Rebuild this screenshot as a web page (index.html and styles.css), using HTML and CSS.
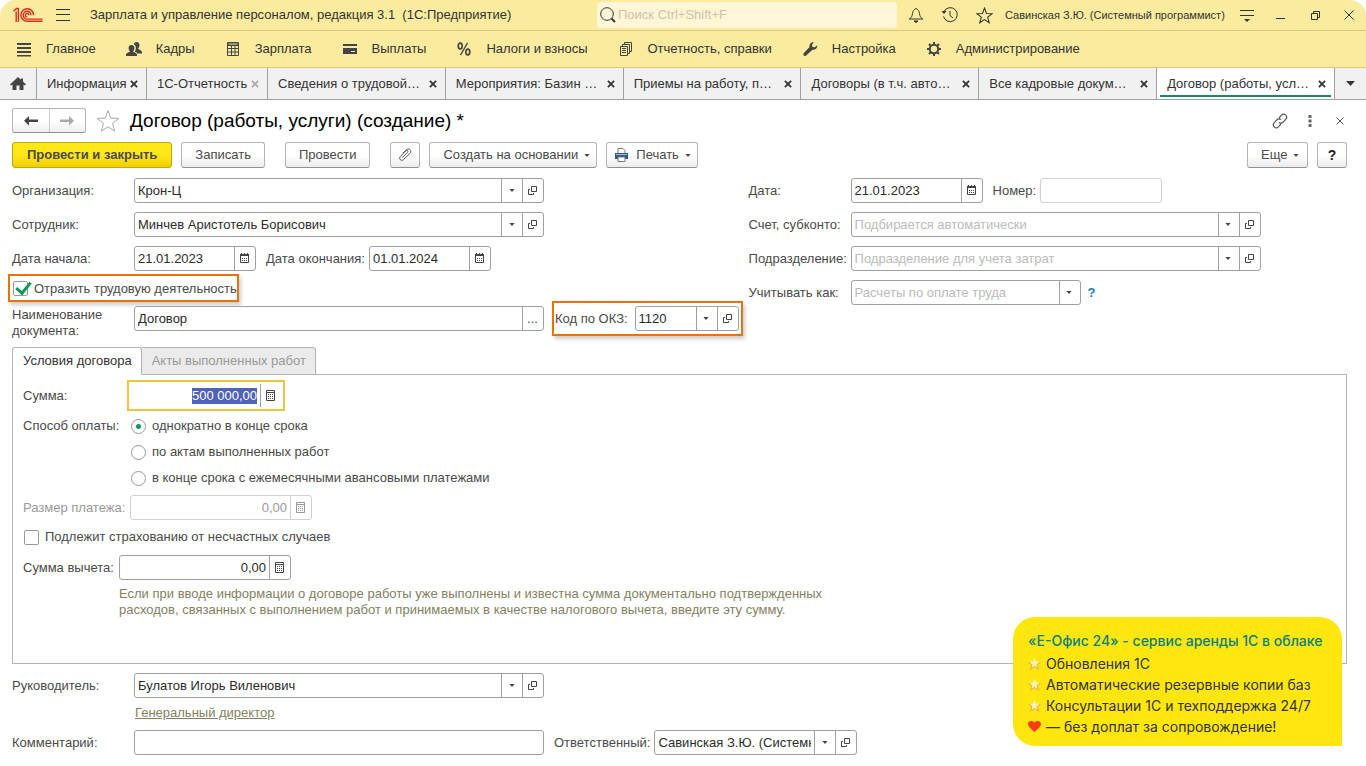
FILE: index.html
```html
<!DOCTYPE html>
<html lang="ru">

<head>
  <meta charset="utf-8">
  <meta name="viewport" content="width=device-width, initial-scale=1.0">
  <title>Договор (работы, услуги) (создание) *</title>
  <link rel="stylesheet" href="styles.css">
</head>

<body>
  <svg class="sprite" aria-hidden="true">
    <symbol id="i-down" viewBox="0 0 7 4">
      <path d="M0 0h7L3.5 4z" fill="currentColor" />
    </symbol>
    <symbol id="i-open" viewBox="0 0 11 11">
      <path d="M4.5 1.5h5v5h-5zM3 4.5H1.5v5h5V8" fill="none" stroke="currentColor" />
    </symbol>
    <symbol id="i-cal" viewBox="0 0 11 11">
      <path d="M1 1h9v2H1z" fill="currentColor" />
      <path d="M2.5 0v2M5.500 0v2M8.500 0v2" stroke="currentColor" />
      <path d="M1.500 3v6.500h8V3" fill="none" stroke="currentColor" />
      <path d="M3 5.500h1m1 0h1m1 0h1M3 7.500h1m1 0h1m1 0h1" stroke="currentColor" />
    </symbol>
    <symbol id="i-calc" viewBox="0 0 11 11">
      <path d="M1.5.5h8v10h-8zM1.5 2.5h8" fill="none" stroke="currentColor" />
      <path d="M3 4.5h1m1 0h1m1 0h1M3 6.5h1m1 0h1m1 0h1M3 8.5h1m1 0h1m1 0h1" stroke="currentColor" />
    </symbol>
    <symbol id="i-x" viewBox="0 0 9 9">
      <path d="M1 1l7 7M8 1L1 8" stroke="currentColor" stroke-width="2" />
    </symbol>
    <symbol id="i-star" viewBox="0 0 24 24">
      <path d="M12 1.5l2.8 7.6 8 .3-6.3 5 2.2 7.8-6.7-4.5-6.7 4.5 2.2-7.8-6.3-5 8-.3z" fill="none" stroke="currentColor" />
    </symbol>
    <symbol id="i-gold" viewBox="0 0 24 24">
      <path d="M12 1l3.2 7.4 8 .6-6.1 5.2 2 7.8-7.1-4.2L4.900 22l2-7.800L.8 9l8-.6z" fill="#fff3b0" />
      <path d="M.8 9l6.100 5.200L4.900 22l7.100-4.200 7.100 4.200-2-7.800L23.200 9" fill="none" stroke="#eeb040" stroke-width="2" />
    </symbol>
  </svg>

  <header class="titlebar">
    <svg class="logo" viewBox="0 0 30 16" fill="none" stroke="#dc2b1f" stroke-width="1.4">
      <path d="M.5 4.2L3.5 1.5H5.4V15M3.2 4.5V15" />
      <path d="M20.500 8.300A6.300 6.300 0 1 0 14.200 14.300H29.500" />
      <path d="M18 8.300A3.900 3.900 0 1 0 14.200 12.100H29.500" />
      <path d="M15.800 8.300A1.700 1.700 0 1 0 14.200 9.900" />
    </svg>
    <button class="tb-btn burger" aria-label="Меню">
      <svg width="14" height="12" viewBox="0 0 14 12"><path d="M0 .5h14M0 5.5h14M0 11.5h14" stroke="#333" /></svg>
    </button>
    <div class="app-title">Зарплата и управление персоналом, редакция 3.1 &nbsp;(1С:Предприятие)</div>
    <label class="search">
      <svg width="16" height="16" viewBox="0 0 16 16" fill="none" stroke="#333"><circle cx="7" cy="7" r="6.3" /><path d="M11.5 11.5l3.5 3.5" stroke-width="2" /></svg>
      <input type="text" placeholder="Поиск Ctrl+Shift+F" aria-label="Поиск">
    </label>
    <button class="tb-btn" aria-label="Уведомления">
      <svg width="16" height="16" viewBox="0 0 16 16" fill="none" stroke="#333"><path d="M8 1.500C6 2.500 4.800 3.800 4.500 6.500c-.3 2.800-1.200 4-3.300 5.500h13.600c-2.100-1.500-3-2.700-3.300-5.500C11.200 3.800 10 2.500 8 1.500z" /><path d="M6 14h4l-2 1.500z" fill="#333" /></svg>
    </button>
    <button class="tb-btn" aria-label="История">
      <svg width="18" height="16" viewBox="0 0 18 16" fill="none" stroke="#333"><path d="M3 4.5a7 7 0 1 1-.5 5" /><path d="M.5 4h5L3 7z" fill="#333" stroke="none" /><path d="M9 4v4.500l3 2.500" /></svg>
    </button>
    <button class="tb-btn" aria-label="Избранное">
      <svg width="17" height="17"><use href="#i-star" stroke-width="1.5" /></svg>
    </button>
    <div class="user">Савинская З.Ю. (Системный программист)</div>
    <button class="tb-btn" aria-label="Сервис">
      <svg width="14" height="13" viewBox="0 0 14 13"><path d="M0 1.5h14M0 6.5h14" stroke="#333" /><path d="M4 10h6l-3 3z" fill="#333" /></svg>
    </button>
    <button class="tb-btn" aria-label="Свернуть">
      <svg width="10" height="10" viewBox="0 0 10 10"><path d="M0 8.5h9" stroke="#333" /></svg>
    </button>
    <button class="tb-btn" aria-label="Развернуть">
      <svg width="9" height="9" viewBox="0 0 9 9" fill="none" stroke="#333"><path d="M.5 2.5h6v6h-6zM2.5 2.5v-2h6v6h-2" /></svg>
    </button>
    <button class="tb-btn" aria-label="Закрыть">
      <svg width="10" height="10" viewBox="0 0 10 10"><path d="M.5.5l9 9M9.5.5l-9 9" stroke="#333" /></svg>
    </button>
  </header>

  <nav class="sections">
    <a href="#"><svg viewBox="0 0 16 16"><path d="M1 2h14v2H1zM1 6h14v2H1zM1 10h14v2H1zM1 14h14v1.500H1z" /></svg>Главное</a>
    <a href="#"><svg viewBox="0 0 16 16"><path d="M10.500 1c2 0 3 1.300 3 3.200 0 1.300-.6 2.500-1.400 3.200.2 1 3.600 1.500 3.900 3.600v1.500h-4.500c-.6-1-2-1.700-3-2 1-1 1.400-2 1.400-3.500 0-1.800-.9-2.900-2-3.400C8.300 1.800 9.200 1 10.500 1z" /><path d="M5.500 4c1.900 0 2.900 1.200 2.900 3S7.700 9.500 7.100 10.200c0 1.100 3.700 1.300 3.900 3.500V15H0v-1.300c.2-2.200 3.900-2.400 3.900-3.500C3.300 9.500 2.600 8.800 2.600 7s1-3 2.900-3z" /></svg>Кадры</a>
    <a href="#"><svg viewBox="0 0 16 16"><path d="M2.500 1.500h11v13h-11zM3 4h10M3 7.500h10M3 11h10M6.500 4v10.500M10 4v10.500" fill="none" stroke="#444" /><path d="M3 2h10v2.500H3z" fill="none" stroke="#444" /></svg>Зарплата</a>
    <a href="#"><svg viewBox="0 0 16 16"><path d="M1 3h14v2H1zM1 7h14v6H1zM9 10v1h4v-1z" fill-rule="evenodd" /></svg>Выплаты</a>
    <a href="#"><svg viewBox="0 0 16 16" fill="none" stroke="#444" stroke-width="1.700"><ellipse cx="4.200" cy="5" rx="2" ry="2.800" /><ellipse cx="11.800" cy="11" rx="2" ry="2.800" /><path d="M11.500 2L4.500 14" stroke-width="1.400" /></svg>Налоги и взносы</a>
    <a href="#"><svg viewBox="0 0 16 16" fill="none" stroke="#444"><path d="M2.500 5.500h7v9h-7zM4.500 5V3.500h7v9H10M6.500 3V1.500h7v9H12M4 7.500h4M4 9.500h4M4 11.500h4" /></svg>Отчетность, справки</a>
    <a href="#"><svg viewBox="0 0 16 16"><path d="M15.300 4.200c.2 2.800-2 5-4.800 4.500L4.200 14.600c-1.600 1.400-3.800-.7-2.500-2.400L7.500 6C7 3.200 9 .8 12 1.200L9.900 3.700l.6 2.300 2.300.3z" /></svg>Настройка</a>
    <a href="#"><svg viewBox="0 0 16 16" fill="none" stroke="#444"><circle cx="8" cy="8" r="4.200" stroke-width="2" /><path d="M8 1v3M8 12v3M1 8h3M12 8h3M3 3l2.200 2.200M10.800 10.800L13 13M3 13l2.200-2.200M10.800 5.200L13 3" stroke-width="2" /></svg>Администрирование</a>
  </nav>

  <nav class="tabs">
    <button class="tab home" aria-label="Начальная страница"><svg width="16" height="14" viewBox="0 0 16 14"><path d="M8 0L0 7.500l1 1L2.500 7.500V13h4V8.500h3V13h4V7.500L15 8.500l1-1-3-3V1.500h-2v1.300z" fill="#444" /></svg></button>
    <div class="tab info"><span>Информация</span><button aria-label="Закрыть вкладку"><svg><use href="#i-x" /></svg></button></div>
    <div class="tab report"><span>1С-Отчетность</span><button class="pale" aria-label="Закрыть вкладку"><svg><use href="#i-x" /></svg></button></div>
    <div class="tab wide"><span>Сведения о трудовой…</span><button aria-label="Закрыть вкладку"><svg><use href="#i-x" /></svg></button></div>
    <div class="tab wide"><span>Мероприятия: Базин …</span><button aria-label="Закрыть вкладку"><svg><use href="#i-x" /></svg></button></div>
    <div class="tab wide"><span>Приемы на работу, п…</span><button aria-label="Закрыть вкладку"><svg><use href="#i-x" /></svg></button></div>
    <div class="tab wide"><span>Договоры (в т.ч. авто…</span><button aria-label="Закрыть вкладку"><svg><use href="#i-x" /></svg></button></div>
    <div class="tab wide"><span>Все кадровые докум…</span><button aria-label="Закрыть вкладку"><svg><use href="#i-x" /></svg></button></div>
    <div class="tab wide active"><span>Договор (работы, усл…</span><button aria-label="Закрыть вкладку"><svg><use href="#i-x" /></svg></button></div>
    <button class="tab more" aria-label="Все вкладки"><svg width="9" height="5"><use href="#i-down" /></svg></button>
  </nav>

  <main class="form">
    <div class="head">
      <div class="history">
        <button aria-label="Назад"><svg width="14" height="10" viewBox="0 0 14 10"><path d="M5 0v3.500h9v2.500H5V9.500L0 4.750z" fill="#444" /></svg></button>
        <button aria-label="Вперед"><svg width="14" height="10" viewBox="0 0 14 10"><path d="M9 0v3.500H0v2.500h9V9.500l5-4.750z" fill="#aaa" /></svg></button>
      </div>
      <button class="plain fav" aria-label="В избранное"><svg width="24" height="24"><use href="#i-star" /></svg></button>
      <h1>Договор (работы, услуги) (создание) *</h1>
      <button class="plain" aria-label="Ссылка"><svg width="16" height="16" viewBox="0 0 16 16" fill="none" stroke="#555" stroke-width="1.2"><path d="M7 5l2.500-2.800a2.900 2.900 0 0 1 4.200 4.200L11 9.300c-1.200 1.100-2.800 1-3.800.2M9 11l-2.500 2.800a2.900 2.900 0 0 1-4.200-4.200L5 6.700c1.200-1.100 2.800-1 3.800-.2" /></svg></button>
      <button class="plain" aria-label="Действия"><svg width="4" height="12" viewBox="0 0 4 12"><path d="M.5 0h3v3h-3zM.5 4.500h3v3h-3zM.5 9h3v3h-3z" fill="#666" /></svg></button>
      <button class="plain" aria-label="Закрыть форму"><svg width="8" height="8" viewBox="0 0 8 8"><path d="M.5.5l7 7M7.5.5l-7 7" stroke="#555" /></svg></button>
    </div>

    <div class="commands">
      <button class="btn primary">Провести и закрыть</button>
      <button class="btn">Записать</button>
      <button class="btn apart">Провести</button>
      <button class="btn small apart" aria-label="Файлы"><svg width="14" height="14" viewBox="0 0 14 14" fill="none" stroke="#555"><path d="M4.500 9.500L9.500 4.300c1.200-1.200-.5-2.700-1.600-1.600L2.300 8.500c-2 2.200 1 5.200 3.200 3.200L12 5.200c2.400-2.500-1-5.800-3.500-3.500L5 5" /></svg></button>
      <button class="btn">Создать на основании <svg class="caret"><use href="#i-down" /></svg></button>
      <button class="btn print"><svg width="15" height="14" viewBox="0 0 15 14"><path d="M4 5V.5h5L11 2.500V5" fill="#fff" stroke="#777" /><path d="M1 5h13v6H1z" fill="#2d587f" /><path d="M2 6.500h11" stroke="#9fc0dc" /><path d="M4 9h7v4.500H4z" fill="#fff" stroke="#777" /></svg>Печать <svg class="caret"><use href="#i-down" /></svg></button>
      <button class="btn push">Еще <svg class="caret"><use href="#i-down" /></svg></button>
      <button class="btn small help">?</button>
    </div>

    <div class="columns">
      <div class="col">
        <div class="row">
          <label class="name" for="org">Организация:</label>
          <div class="field long"><input id="org" type="text" value="Крон-Ц"><button aria-label="Выбрать"><svg class="caret"><use href="#i-down" /></svg></button><button aria-label="Открыть"><svg><use href="#i-open" /></svg></button></div>
        </div>
        <div class="row">
          <label class="name" for="person">Сотрудник:</label>
          <div class="field long"><input id="person" type="text" value="Минчев Аристотель Борисович"><button aria-label="Выбрать"><svg class="caret"><use href="#i-down" /></svg></button><button aria-label="Открыть"><svg><use href="#i-open" /></svg></button></div>
        </div>
        <div class="row">
          <label class="name" for="from">Дата начала:</label>
          <div class="field date"><input id="from" type="text" value="21.01.2023"><button aria-label="Календарь"><svg><use href="#i-cal" /></svg></button></div>
          <label class="next" for="to">Дата окончания:</label>
          <div class="field date"><input id="to" type="text" value="01.01.2024"><button aria-label="Календарь"><svg><use href="#i-cal" /></svg></button></div>
        </div>
        <label class="marked reflect"><input type="checkbox" checked>Отразить трудовую деятельность</label>
        <div class="row doc">
          <label class="name" for="doc">Наименование документа:</label>
          <div class="field long"><input id="doc" type="text" value="Договор"><button aria-label="Выбрать">...</button></div>
          <div class="marked okz">
            <label for="okz">Код по ОКЗ:</label>
            <div class="field code"><input id="okz" type="text" value="1120"><button aria-label="Выбрать"><svg class="caret"><use href="#i-down" /></svg></button><button aria-label="Открыть"><svg><use href="#i-open" /></svg></button></div>
          </div>
        </div>
      </div>

      <div class="col right">
        <div class="row">
          <label class="name" for="date">Дата:</label>
          <div class="field docdate"><input id="date" type="text" value="21.01.2023"><button aria-label="Календарь"><svg><use href="#i-cal" /></svg></button></div>
          <label class="next" for="num">Номер:</label>
          <div class="field date off"><input id="num" type="text" disabled></div>
        </div>
        <div class="row">
          <label class="name" for="account">Счет, субконто:</label>
          <div class="field long"><input id="account" type="text" placeholder="Подбирается автоматически"><button aria-label="Выбрать"><svg class="caret"><use href="#i-down" /></svg></button><button aria-label="Открыть"><svg><use href="#i-open" /></svg></button></div>
        </div>
        <div class="row">
          <label class="name" for="dept">Подразделение:</label>
          <div class="field long"><input id="dept" type="text" placeholder="Подразделение для учета затрат"><button aria-label="Выбрать"><svg class="caret"><use href="#i-down" /></svg></button><button aria-label="Открыть"><svg><use href="#i-open" /></svg></button></div>
        </div>
        <div class="row">
          <label class="name" for="kind">Учитывать как:</label>
          <div class="field kind"><select id="kind"><option>Расчеты по оплате труда</option></select><span class="arrow"><svg class="caret"><use href="#i-down" /></svg></span></div>
          <a class="hint-link" href="#">?</a>
        </div>
      </div>
    </div>

    <div class="pages">
      <button class="page current">Условия договора</button>
      <button class="page" disabled>Акты выполненных работ</button>
    </div>
    <section class="panel">
      <div class="row sum">
        <label for="sum">Сумма:</label>
        <div class="field focus"><input id="sum" type="text" value="500 000,00"><button aria-label="Калькулятор"><svg><use href="#i-calc" /></svg></button></div>
      </div>
      <div class="pay">
        <span id="pay-label">Способ оплаты:</span>
        <div class="radios" role="radiogroup" aria-labelledby="pay-label">
          <label><input type="radio" name="pay" checked>однократно в конце срока</label>
          <label><input type="radio" name="pay">по актам выполненных работ</label>
          <label><input type="radio" name="pay">в конце срока с ежемесячными авансовыми платежами</label>
        </div>
      </div>
      <div class="row size">
        <label for="size">Размер платежа:</label>
        <div class="field off"><input id="size" type="text" value="0,00" disabled><button disabled aria-label="Калькулятор"><svg><use href="#i-calc" /></svg></button></div>
      </div>
      <label class="insure"><input type="checkbox">Подлежит страхованию от несчастных случаев</label>
      <div class="row deduct">
        <label for="deduct">Сумма вычета:</label>
        <div class="field"><input id="deduct" type="text" value="0,00"><button aria-label="Калькулятор"><svg><use href="#i-calc" /></svg></button></div>
      </div>
      <p class="note">Если при вводе информации о договоре работы уже выполнены и известна сумма документально подтвержденных расходов, связанных с выполнением работ и принимаемых в качестве налогового вычета, введите эту сумму.</p>
    </section>

    <div class="row">
      <label class="name" for="boss">Руководитель:</label>
      <div class="field long"><input id="boss" type="text" value="Булатов Игорь Виленович"><button aria-label="Выбрать"><svg class="caret"><use href="#i-down" /></svg></button><button aria-label="Открыть"><svg><use href="#i-open" /></svg></button></div>
    </div>
    <a class="post" href="#">Генеральный директор</a>
    <div class="row">
      <label class="name" for="comment">Комментарий:</label>
      <div class="field long"><input id="comment" type="text"></div>
      <label class="next" for="resp">Ответственный:</label>
      <div class="field resp"><input id="resp" type="text" value="Савинская З.Ю. (Системный программист)"><button aria-label="Выбрать"><svg class="caret"><use href="#i-down" /></svg></button><button aria-label="Открыть"><svg><use href="#i-open" /></svg></button></div>
    </div>
  </main>

  <aside class="promo">
    <h2>«Е-Офис 24» - сервис аренды 1С в облаке</h2>
    <ul>
      <li><svg><use href="#i-gold" /></svg>Обновления 1С</li>
      <li><svg><use href="#i-gold" /></svg>Автоматические резервные копии баз</li>
      <li><svg><use href="#i-gold" /></svg>Консультации 1С и техподдержка 24/7</li>
      <li><svg viewBox="0 0 24 24"><path d="M12 22C4 16 0 12 0 7.500 0 1 8.500-.5 12 5c3.500-5.500 12-4 12 2.500 0 4.500-4 8.500-12 14.500z" fill="#ff3b0f" /></svg>— без доплат за сопровождение!</li>
    </ul>
  </aside>

  <script>
    // the amount is ready to be typed over
    document.getElementById("sum").focus();
    document.getElementById("sum").select();
  </script>
</body>

</html>
```
FILE: styles.css
```css
* {
  box-sizing: border-box;
}

body {
  margin: 0;
  background: #fff;
  color: #4a4a4a;
  font-family: "Liberation Sans", Arial, sans-serif;
  font-size: 13px;
  line-height: 16px;
}

button,
input,
select {
  margin: 0;
  font-family: inherit;
  font-size: 13px;
  line-height: 16px;
  color: inherit;
}

.sprite {
  display: none;
}

/* title bar */
.titlebar {
  display: flex;
  align-items: center;
  height: 31px;
  padding-left: 13px;
  background: #fbeb9e;
  border-bottom: 1px solid #d9c77a;
  border-radius: 16px 16px 0 0;
  color: #333;
}

.logo {
  width: 30px;
  height: 16px;
}

.tb-btn {
  display: flex;
  align-items: center;
  justify-content: center;
  width: 34px;
  height: 30px;
  padding: 0;
  border: none;
  background: none;
}

.burger {
  width: 40px;
}

.app-title {
  flex: 1;
  padding-left: 7px;
  white-space: nowrap;
}

.search {
  display: flex;
  align-items: center;
  width: 300px;
  height: 26px;
  margin-right: 2px;
  padding-left: 3px;
  background: #fef6d6;
  border-radius: 4px;
}

.search input {
  flex: 1;
  border: none;
  background: none;
  outline: none;
}

.search input::placeholder {
  color: #cdc5a4;
}

.user {
  width: 229px;
  padding-left: 4px;
  font-size: 11px;
  white-space: nowrap;
}

/* sections */
.sections {
  display: flex;
  align-items: center;
  gap: 30px;
  height: 37px;
  padding-left: 16px;
  background: #fbeb9e;
  border-bottom: 1px solid #d9c77a;
}

.sections a {
  display: flex;
  align-items: center;
  gap: 14px;
  color: #333;
  text-decoration: none;
  white-space: nowrap;
}

.sections svg {
  width: 16px;
  height: 16px;
}

.sections svg:not([fill]) {
  fill: #444;
}

/* open windows */
.tabs {
  display: flex;
  height: 32px;
  background: #f1f1f1;
  border-bottom: 1px solid #a0a0a0;
}

.tab {
  position: relative;
  display: flex;
  align-items: center;
  justify-content: space-between;
  padding: 0 8px 0 10px;
  border: none;
  border-right: 1px solid #a0a0a0;
  background: none;
  color: #333;
  white-space: nowrap;
}

.tab.home {
  width: 37px;
}

.tab.info {
  width: 110px;
}

.tab.report {
  width: 121px;
}

.tab.wide {
  flex: 1;
}

.tab.more {
  width: 31px;
  justify-content: center;
  padding: 0;
  border-right: none;
}

.tab.active {
  background: #fff;
}

.tab.active::after {
  content: "";
  position: absolute;
  left: 3px;
  right: 3px;
  bottom: 2px;
  height: 2px;
  background: #1d8a5f;
}

.tab button {
  display: flex;
  padding: 0;
  border: none;
  background: none;
}

.tab button svg {
  width: 8px;
  height: 8px;
}

.tab .pale {
  color: #aaa;
}

/* form */
.form {
  padding: 8px 19px 0 12px;
}

.head {
  display: flex;
  align-items: center;
  height: 25px;
}

.history {
  display: flex;
  width: 74px;
  height: 25px;
  border: 1px solid #b5b5b5;
  border-bottom-color: #909090;
  border-radius: 3px;
  background: linear-gradient(#fff 50%, #eee);
}

.history button {
  display: flex;
  flex: 1;
  align-items: center;
  justify-content: center;
  padding: 0;
  border: none;
  background: none;
}

.history button + button {
  border-left: 1px solid #ccc;
}

.plain {
  display: flex;
  align-items: center;
  justify-content: center;
  width: 30px;
  padding: 0;
  border: none;
  background: none;
}

.head .plain:last-child {
  margin-right: -8px;
}

.plain.fav {
  width: 44px;
  color: #aaa;
}

h1 {
  flex: 1;
  margin: 0;
  font-size: 19px;
  font-weight: normal;
  line-height: 24px;
  color: #000;
}

.commands {
  display: flex;
  gap: 9px;
  margin-top: 9px;
}

.btn {
  display: flex;
  align-items: center;
  height: 26px;
  padding: 0 13px;
  border: 1px solid #b5b5b5;
  border-bottom-color: #909090;
  border-radius: 3px;
  background: linear-gradient(#fff 50%, #ececec);
  white-space: nowrap;
}

.btn.primary {
  padding: 0 14px;
  border-color: #c4a800;
  background: linear-gradient(#ffe71a 50%, #efcf00);
  font-weight: bold;
}

.btn.apart {
  margin-left: 11px;
}

.btn.small {
  width: 30px;
  padding: 0;
  justify-content: center;
}

.btn .caret {
  margin-left: 6px;
}

.btn:has(.caret) {
  padding-right: 6px;
}

.btn.print {
  padding-left: 7px;
}

.print svg:first-child {
  margin-right: 7px;
}

.push {
  min-width: 61px;
  margin-left: auto;
}

.help {
  font-size: 14px;
  font-weight: bold;
  color: #222;
}

svg.caret {
  width: 6px;
  height: 3px;
}

.columns {
  display: grid;
  grid-template-columns: 16fr 13fr;
  margin-top: 10px;
}

.row {
  display: flex;
  align-items: center;
  margin-bottom: 9px;
  white-space: nowrap;
}

.name {
  flex: none;
  width: 122px;
}

.right .name {
  width: 102px;
}

.next {
  margin: 0 4px 0 10px;
}

.field {
  display: flex;
  height: 25px;
  border: 1px solid #a0a0a0;
  border-radius: 3px;
  background: #fff;
}

.field.long {
  width: 410px;
}

.field.date {
  width: 122px;
}

.field.docdate {
  width: 132px;
}

.field.code {
  width: 104px;
}

.field.kind {
  width: 230px;
}

.field.resp {
  width: 203px;
}

.field input,
.field select {
  flex: 1;
  min-width: 0;
  padding: 0 3px;
  border: none;
  outline: none;
  background: none;
  color: #2b2b2b;
}

.field select {
  appearance: none;
  color: #bbb;
}

.field input::placeholder {
  color: #bbb;
}

.field button,
.arrow {
  display: flex;
  flex: none;
  align-items: center;
  justify-content: center;
  width: 21px;
  padding: 0 1px 0 0;
  border: none;
  border-left: 1px solid #a0a0a0;
  background: none;
  color: #444;
}

.field button svg:not(.caret) {
  width: 11px;
  height: 11px;
}

.field.off,
.field.off button {
  border-color: #d0d0d0;
}

.field.off input,
.field.off button {
  color: #999;
}

.hint-link {
  margin-left: 7px;
  color: #1a7bb5;
  font-weight: bold;
  text-decoration: none;
}

/* orange frames */
.marked {
  display: flex;
  align-items: center;
  border: 2px solid #e8720c;
  box-shadow: 2px 3px 4px rgba(0, 0, 0, 0.2);
}

.reflect {
  width: max-content;
  height: 28px;
  margin: -6px 0 0 -4px;
  padding: 1px 0 0 3px;
}

.row.doc {
  align-items: flex-start;
  margin: 4px 0 0;
}

.doc .name {
  padding-top: 1px;
  white-space: normal;
}

.okz {
  gap: 7px;
  height: 35px;
  margin: -5px 0 0 8px;
  padding: 0 2px 0 1px;
}

input[type="checkbox"],
input[type="radio"] {
  appearance: none;
  flex: none;
  width: 15px;
  height: 15px;
  border: 1px solid #999;
  border-radius: 2px;
  background: #fff;
}

input[type="checkbox"] {
  position: relative;
  margin-right: 6px;
}

input[type="checkbox"]:checked::after {
  content: "";
  position: absolute;
  left: 5px;
  top: -3px;
  width: 6px;
  height: 12px;
  border: solid #0c9a55;
  border-width: 0 3px 3px 0;
  transform: rotate(40deg);
}

input[type="radio"] {
  margin-right: 6px;
  border-radius: 50%;
}

input[type="radio"]:checked {
  background: radial-gradient(circle, #0c9a55 2px, #fff 3px);
}

/* pages of the contract */
.pages {
  display: flex;
  margin-top: 8px;
}

.page {
  height: 28px;
  padding: 0 9px 0 10px;
  border: 1px solid #b5b5b5;
  border-left: none;
  border-radius: 0 3px 0 0;
  background: #ebebeb;
  color: #999;
}

.page.current {
  position: relative;
  border-left: 1px solid #b5b5b5;
  border-bottom-color: #fff;
  border-radius: 3px 3px 0 0;
  background: #fff;
  color: #333;
}

.panel {
  min-height: 290px;
  margin: -1px 0 9px;
  padding: 5px 10px 0;
  border: 1px solid #b5b5b5;
}

.panel .row {
  margin-bottom: 0;
}

.panel .row input {
  text-align: right;
}

.sum label {
  width: 104px;
}

.field.focus {
  width: 158px;
  height: 31px;
  padding: 2px;
  border: 2px solid #ebc63f;
  border-radius: 0;
}

#sum::selection {
  background: #4f63bb;
  color: #fff;
}

.pay {
  display: flex;
  margin-top: 7px;
}

.pay > span {
  width: 108px;
}

.radios {
  display: flex;
  flex-direction: column;
  gap: 10px;
}

.radios label,
.insure {
  display: flex;
  align-items: center;
}

.row.size {
  margin-top: 9px;
  color: #999;
}

.size label {
  width: 107px;
}

.size .field {
  width: 182px;
}

.insure {
  margin: 9px 0 10px 1px;
}

.deduct label {
  width: 96px;
}

.deduct .field {
  width: 172px;
}

.note {
  max-width: 730px;
  margin: 6px 0 0 96px;
  color: #83815f;
}

.post {
  display: block;
  width: max-content;
  margin: -2px 0 9px 123px;
  color: #83815f;
}

/* promo card */
.promo {
  position: absolute;
  right: 24px;
  bottom: 20px;
  width: 329px;
  height: 129px;
  padding: 13px 15px 0;
  border-radius: 22px 22px 0 22px;
  background: #ffe60f;
  color: #333;
  font-family: Inter, sans-serif;
  font-size: 14px;
  line-height: 21px;
  white-space: nowrap;
}

.promo h2 {
  margin: 0 0 2px;
  font-size: 14px;
  font-weight: 500;
  color: #08807f;
}

.promo ul {
  margin: 0;
  padding: 0;
  list-style: none;
}

.promo li {
  display: flex;
  align-items: center;
  gap: 5px;
}

.promo li svg {
  width: 13px;
  height: 13px;
}
```
